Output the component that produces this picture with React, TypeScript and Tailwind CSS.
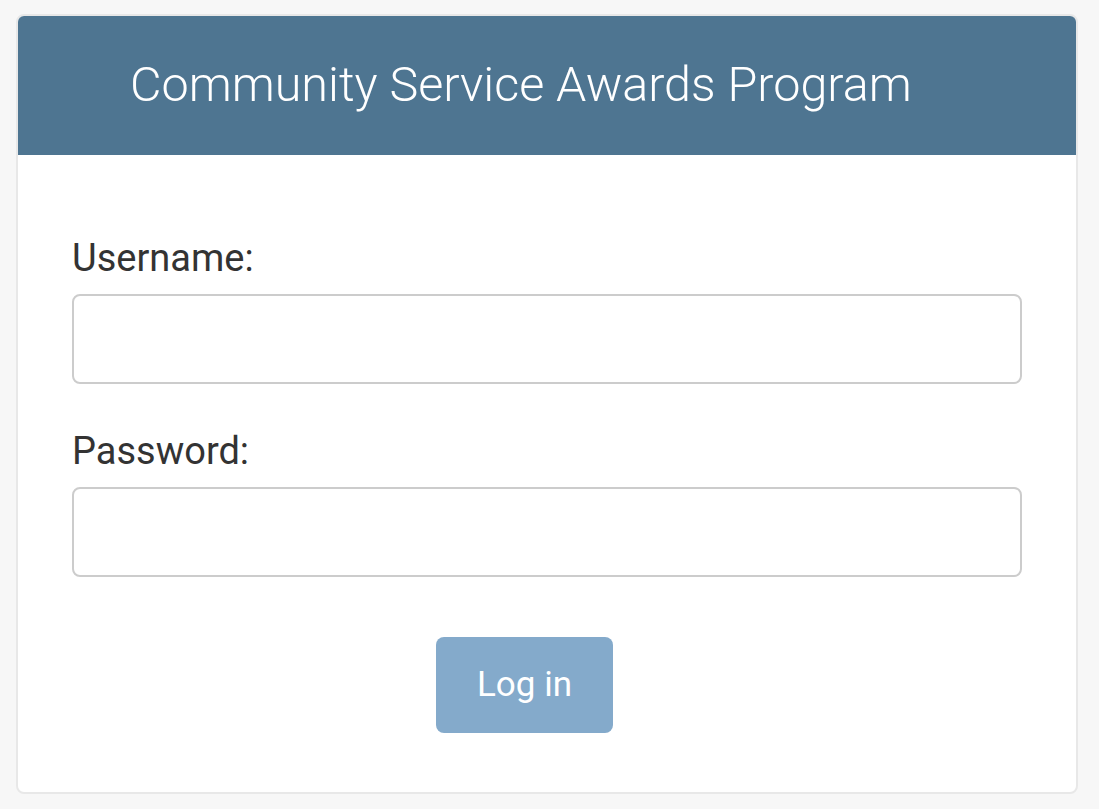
import React, { useState } from 'react';

export default function App() {
  const [username, setUsername] = useState('');
  const [password, setPassword] = useState('');

  return (
    <div className="min-h-screen w-full bg-[#f7f7f7] pl-4 pt-[14px] pb-4" style={{ fontFamily: 'Roboto, "Liberation Sans", sans-serif' }}>
      <div className="w-[1062px] rounded-lg border-2 border-[#e8e8e8] bg-white overflow-hidden">
        <div className="h-[139px] bg-[#4e7591] flex items-center pl-[112px]">
          <h1 className="text-[48.5px] font-light text-white leading-none">Community Service Awards Program</h1>
        </div>

        <form onSubmit={e => e.preventDefault()} className="flex flex-col px-[54px] pt-[76px] pb-[59px]">
          <label className="text-[38px] leading-[54px] text-[#333333]">Username:</label>
          <input
            type="text"
            value={username}
            onChange={e => setUsername(e.target.value)}
            className="mt-[9px] h-[90px] w-full rounded-lg border-2 border-[#cccccc] px-4 text-[32px] outline-none"
          />

          <label className="mt-[40px] text-[38px] leading-[54px] text-[#333333]">Password:</label>
          <input
            type="password"
            value={password}
            onChange={e => setPassword(e.target.value)}
            className="mt-[9px] h-[90px] w-full rounded-lg border-2 border-[#cccccc] px-4 text-[32px] outline-none"
          />

          <div className="mt-[60px] flex pl-[364px]">
            <button
              type="submit"
              className="h-[96px] w-[177px] rounded-lg bg-[#84aacb] text-[35px] text-white"
            >
              Log in
            </button>
          </div>
        </form>
      </div>
    </div>
  );
}
